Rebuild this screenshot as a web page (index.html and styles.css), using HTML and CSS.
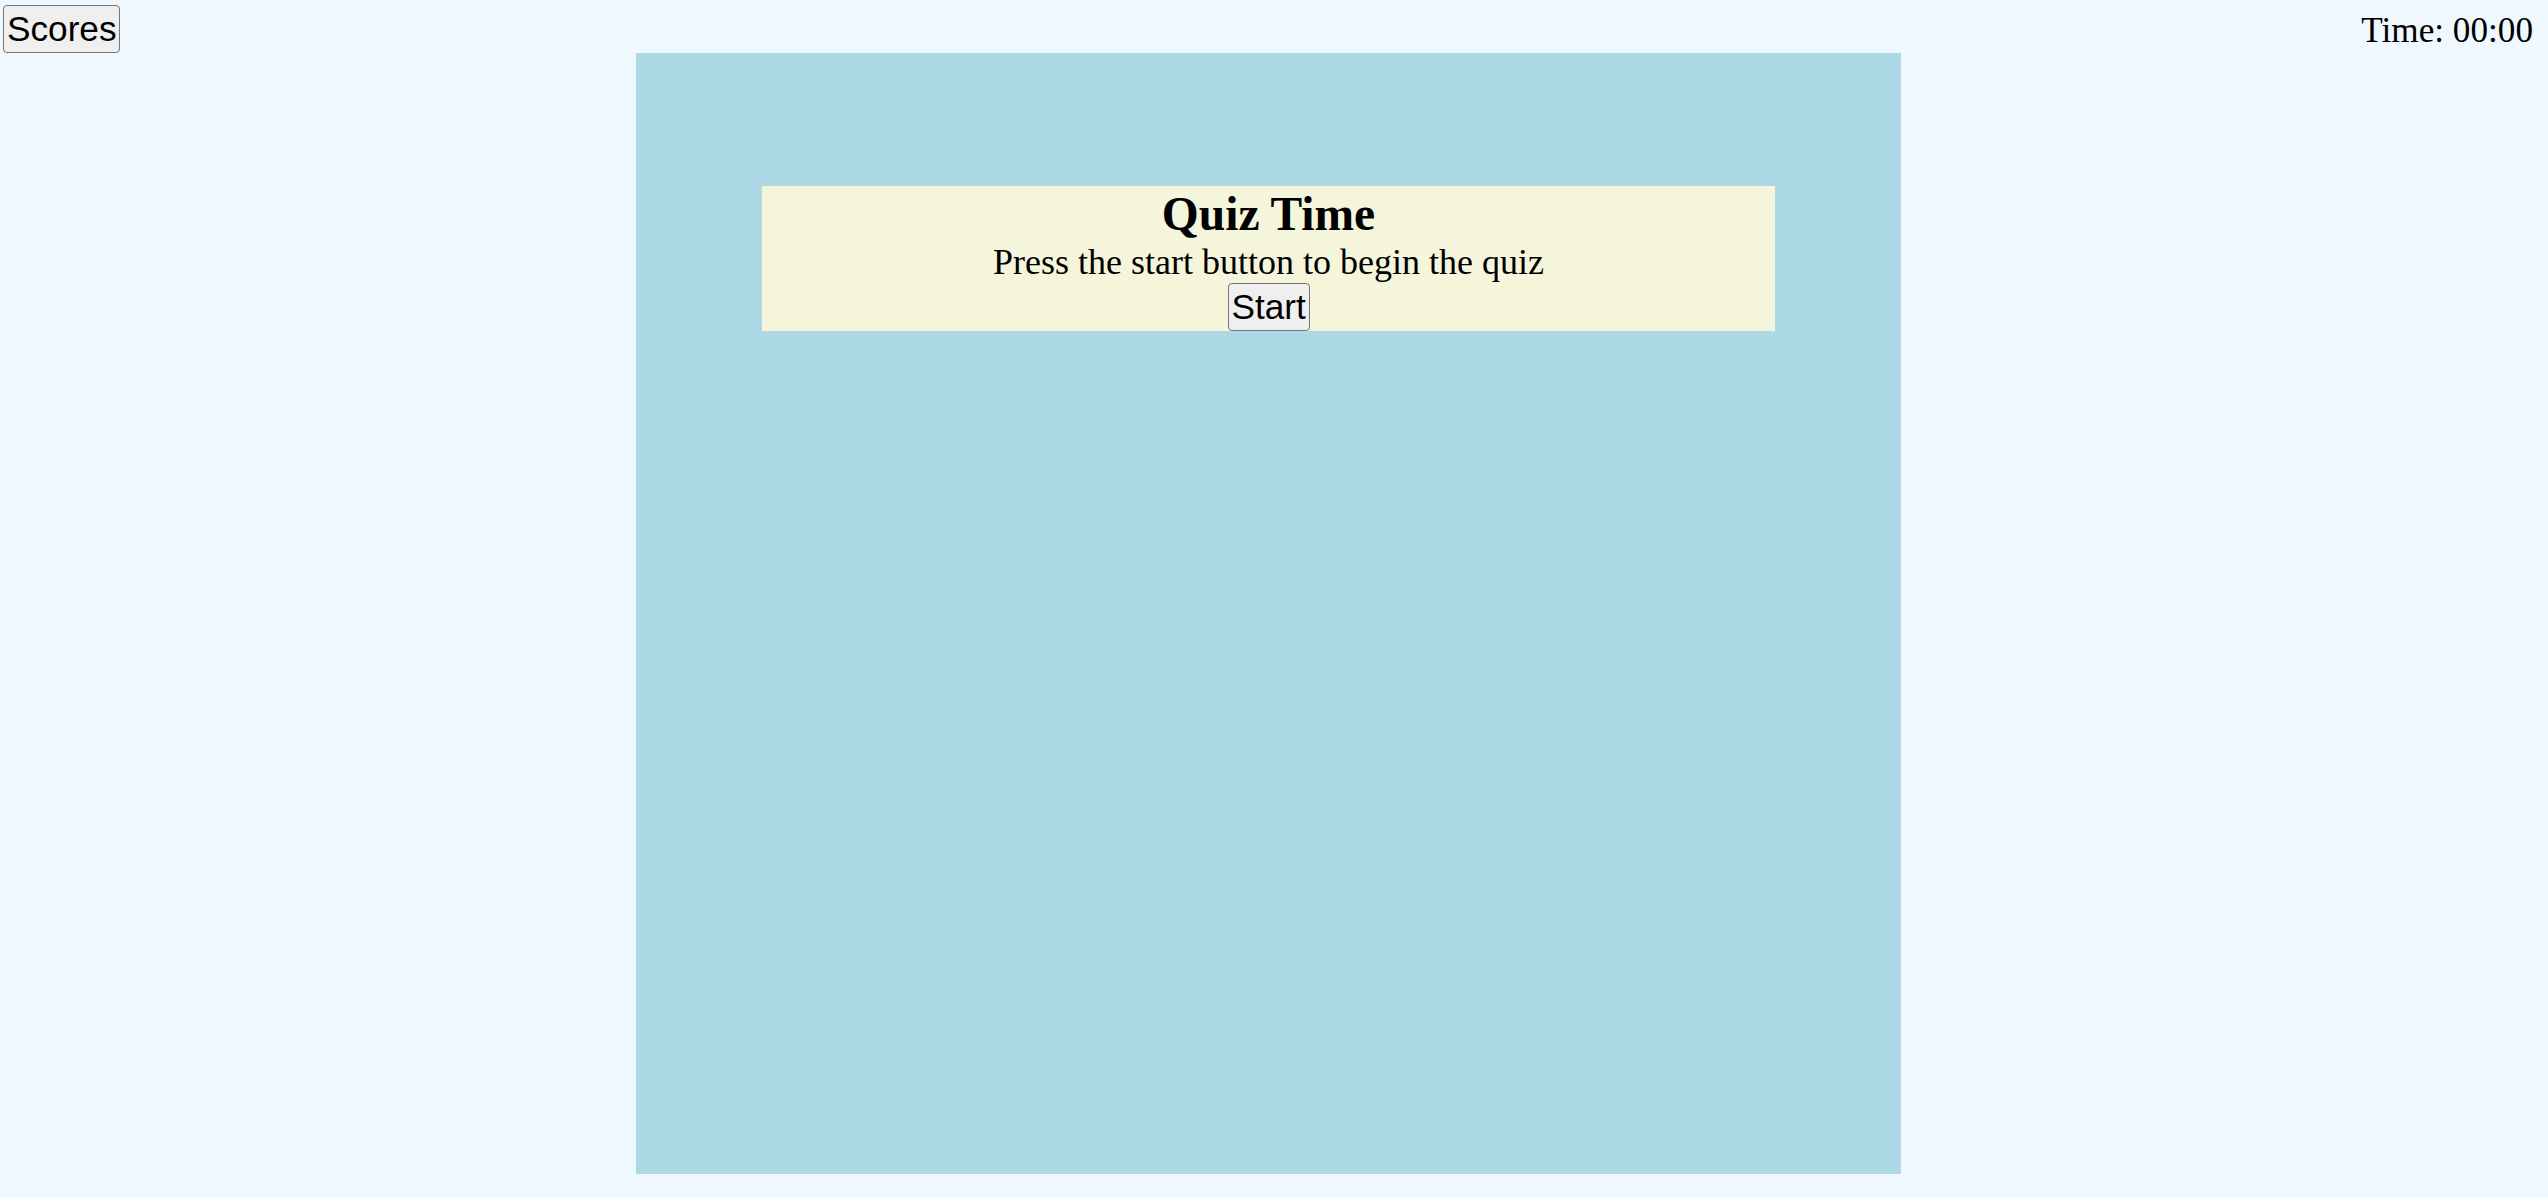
FILE: index.html
```html
<!DOCTYPE html>
<html>
<head>
<meta charset="utf-8">
<title>Quiz</title>
<link rel="stylesheet" href="styles.css">
</head>
<body>
<header class="topbar">
  <button class="scores-btn">Scores</button>
  <div class="timer">Time: 00:00</div>
</header>
<main class="quiz">
  <section class="intro">
    <h1 class="title">Quiz Time</h1>
    <p class="subtitle">Press the start button to begin the quiz</p>
    <button class="start-btn">Start</button>
  </section>
</main>
</body>
</html>
```
FILE: styles.css
```css
html, body {
  margin: 0;
  padding: 0;
}
body {
  background: #f0f8ff;
  font-family: "Liberation Serif", "Times New Roman", serif;
  font-size: 36px;
  color: #000;
}
.topbar {
  display: flex;
  justify-content: space-between;
  align-items: flex-start;
  height: 53px;
  box-sizing: border-box;
  padding: 5px 15px 0 3px;
}
.scores-btn, .start-btn {
  font-family: "Liberation Sans", Arial, sans-serif;
  font-size: 35.2px;
  line-height: 40px;
  background: #efefef;
  border: 1.5px solid #767676;
  border-radius: 4px;
  color: #000;
  padding: 2px 3px;
  margin: 0;
  box-sizing: border-box;
}
.scores-btn {
  width: 117px;
  height: 48px;
}
.timer {
  font-size: 35.2px;
  line-height: 41px;
  padding-top: 5px;
}
.quiz {
  width: 1265px;
  height: 1121px;
  margin-left: 636px;
  background: #add8e6;
  padding-top: 133px;
  box-sizing: border-box;
}
.intro {
  width: 1013px;
  margin: 0 auto;
  background: #f5f5dc;
  display: flex;
  flex-direction: column;
  align-items: center;
  height: 145px;
}
.title {
  margin: 0;
  font-size: 47.5px;
  font-weight: bold;
  line-height: 56px;
}
.subtitle {
  margin: 0;
  font-size: 36px;
  line-height: 41px;
}
.start-btn {
  width: 82px;
  height: 48px;
}
```
